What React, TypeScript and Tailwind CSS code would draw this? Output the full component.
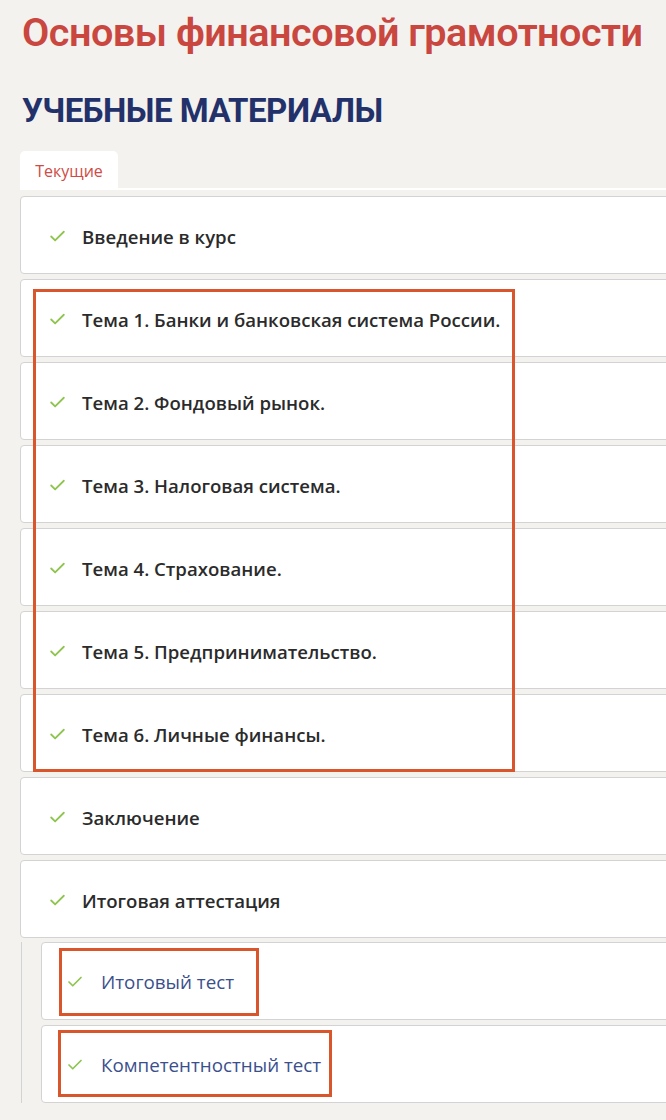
import { Check } from 'lucide-react';

const topics = [
  'Введение в курс',
  'Тема 1. Банки и банковская система России.',
  'Тема 2. Фондовый рынок.',
  'Тема 3. Налоговая система.',
  'Тема 4. Страхование.',
  'Тема 5. Предпринимательство.',
  'Тема 6. Личные финансы.',
  'Заключение',
  'Итоговая аттестация',
];

const tests = ['Итоговый тест', 'Компетентностный тест'];

export default function App() {
  return (
    <div className="relative min-h-[1120px] w-[666px] overflow-hidden bg-[#f3f2ef]" style={{ fontFamily: '"Open Sans", sans-serif' }}>
      <div className="pl-5 pt-[11px]">
        <h1 className="pl-[2px] text-[39.6px] font-semibold leading-[44px] tracking-[-0.5px] text-[#c9473f]" style={{ fontFamily: 'Roboto, sans-serif' }}>
          Основы финансовой грамотности
        </h1>
        <h2 className="mt-[36px] pl-[2px] text-[33px] font-bold leading-[40px] tracking-[-0.5px] text-[#23316b]" style={{ fontFamily: 'Roboto, sans-serif' }}>
          УЧЕБНЫЕ МАТЕРИАЛЫ
        </h2>

        <div className="mt-[20px] flex border-b-2 border-white">
          <div className="flex h-[37px] w-[98px] items-center justify-center rounded-t-[5px] bg-white pt-[2px] text-[16px] text-[#cf4b45]">
            Текущие
          </div>
        </div>

        <div className="mt-[6px] flex w-[680px] flex-col gap-[5px]">
          {topics.map((t) => (
            <div key={t} className="flex h-[78px] items-center gap-[15px] rounded-[4px] border border-[#d3d3d3] bg-white pl-[27px] pt-[3px]">
              <Check className="h-[19px] w-[19px] text-[#8fc44e]" strokeWidth={2.25} />
              <span className="text-[18.6px] font-semibold text-[#2b2b2b]">{t}</span>
            </div>
          ))}
        </div>

        <div className="mt-[4px] ml-[1px] flex w-[680px] flex-col gap-[5px] border-l border-[#d3d3d3] pl-[19px]">
          {tests.map((t) => (
            <div key={t} className="flex h-[78px] items-center gap-[17px] rounded-[4px] border border-[#d3d3d3] bg-white pl-[24px] pt-[2px]">
              <Check className="h-[18px] w-[18px] text-[#8fc44e]" strokeWidth={2.25} />
              <span className="text-[18.8px] text-[#3b4f8d]">{t}</span>
            </div>
          ))}
        </div>
      </div>

      <div className="pointer-events-none absolute left-[33px] top-[289px] h-[483px] w-[482px] border-[3px] border-[#d9552b]" />
      <div className="pointer-events-none absolute left-[59px] top-[948px] h-[68px] w-[200px] border-[3px] border-[#d9552b]" />
      <div className="pointer-events-none absolute left-[58px] top-[1030px] h-[67px] w-[274px] border-[3px] border-[#d9552b]" />
    </div>
  );
}
